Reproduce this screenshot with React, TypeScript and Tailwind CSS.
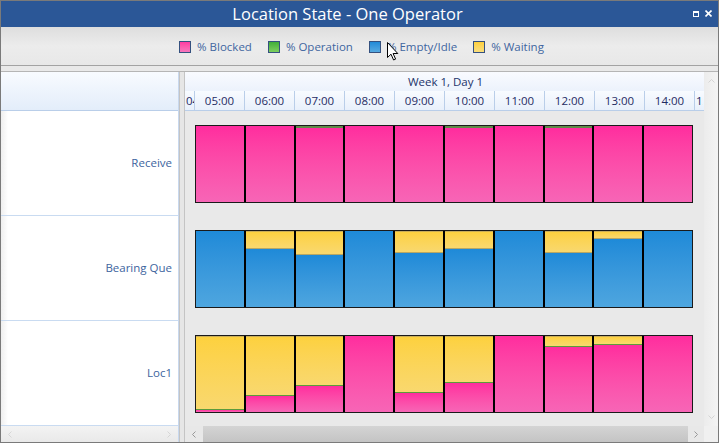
import React from 'react';

// Location state chart: one column per hour, stacked segments as percent of bar height
type Col = { waiting: number; blocked: number; idle: number; op?: boolean };

const hours = ['05:00', '06:00', '07:00', '08:00', '09:00', '10:00', '11:00', '12:00', '13:00', '14:00'];

const rows: { name: string; cols: Col[] }[] = [
  {
    name: 'Receive',
    cols: [
      { waiting: 0, blocked: 100, idle: 0 },
      { waiting: 0, blocked: 100, idle: 0 },
      { waiting: 0, blocked: 100, idle: 0, op: true },
      { waiting: 0, blocked: 100, idle: 0 },
      { waiting: 0, blocked: 100, idle: 0 },
      { waiting: 0, blocked: 100, idle: 0, op: true },
      { waiting: 0, blocked: 100, idle: 0 },
      { waiting: 0, blocked: 100, idle: 0, op: true },
      { waiting: 0, blocked: 100, idle: 0 },
      { waiting: 0, blocked: 100, idle: 0 },
    ],
  },
  {
    name: 'Bearing Que',
    cols: [
      { waiting: 0, blocked: 0, idle: 100 },
      { waiting: 23, blocked: 0, idle: 77 },
      { waiting: 30, blocked: 0, idle: 70 },
      { waiting: 0, blocked: 0, idle: 100 },
      { waiting: 28, blocked: 0, idle: 72 },
      { waiting: 22, blocked: 0, idle: 78 },
      { waiting: 0, blocked: 0, idle: 100 },
      { waiting: 28, blocked: 0, idle: 72 },
      { waiting: 9, blocked: 0, idle: 91 },
      { waiting: 0, blocked: 0, idle: 100 },
    ],
  },
  {
    name: 'Loc1',
    cols: [
      { waiting: 96, blocked: 4, idle: 0 },
      { waiting: 78, blocked: 22, idle: 0 },
      { waiting: 64, blocked: 36, idle: 0 },
      { waiting: 0, blocked: 100, idle: 0 },
      { waiting: 74, blocked: 26, idle: 0 },
      { waiting: 60, blocked: 40, idle: 0 },
      { waiting: 0, blocked: 100, idle: 0 },
      { waiting: 13, blocked: 87, idle: 0 },
      { waiting: 10, blocked: 90, idle: 0 },
      { waiting: 0, blocked: 100, idle: 0 },
    ],
  },
];

const legend = [
  { label: '% Blocked', fill: 'bg-gradient-to-b from-[#ff3aa2] to-[#f776bc]' },
  { label: '% Operation', fill: 'bg-gradient-to-b from-[#3fae3a] to-[#7ccf5e]' },
  { label: '% Empty/Idle', fill: 'bg-gradient-to-b from-[#1f8ad8] to-[#54a9e0]' },
  { label: '% Waiting', fill: 'bg-gradient-to-b from-[#fdd03c] to-[#f9de7c]' },
];

const BAR_H = 76;

const Bar: React.FC<{ col: Col }> = ({ col }) => {
  const w = Math.round((col.waiting / 100) * BAR_H);
  const rest = BAR_H - w;
  const restPink = col.blocked > 0;
  return (
    <div className="flex-1 flex flex-col h-full">
      {w > 0 && (
        <div
          className="bg-gradient-to-b from-[#fdd13e] to-[#f9d86e] border-t border-[#c9ad58]"
          style={{ height: w }}
        />
      )}
      {rest > 0 && (
        <div
          className={`flex-1 ${restPink ? 'bg-gradient-to-b from-[#ff2c9e] to-[#f765b6]' : 'bg-gradient-to-b from-[#1e8ad8] to-[#4ea6df]'} ${
            col.op ? 'border-t-2 border-[#5f8a48]' : w > 0 ? (restPink ? 'border-t border-[#5d9a3c]' : 'border-t border-[#b7a764]') : ''
          }`}
        />
      )}
    </div>
  );
};

const Chevron: React.FC<{ dir: 'l' | 'r' | 'u' | 'd'; className?: string }> = ({ dir, className }) => {
  const d = {
    l: 'M6 1 L2 5 L6 9',
    r: 'M2 1 L6 5 L2 9',
    u: 'M1 6 L5 2 L9 6',
    d: 'M1 2 L5 6 L9 2',
  }[dir];
  const vb = dir === 'l' || dir === 'r' ? '0 0 8 10' : '0 0 10 8';
  return (
    <svg viewBox={vb} className={className} fill="none" stroke="currentColor" strokeWidth="1.2">
      <path d={d} />
    </svg>
  );
};

export default function App() {
  return (
    <div
      className="relative w-[719px] h-[443px] border border-[#7a7a7a] bg-[#e9e9e9] flex flex-col overflow-hidden"
      style={{ fontFamily: '"Open Sans", "Noto Sans", sans-serif' }}
    >
      {/* Title bar */}
      <div className="relative h-[26px] shrink-0 bg-[#2b5797] flex items-center justify-center pr-[24px]">
        <span className="text-white text-[16.5px] leading-none">Location State - One Operator</span>
        <div className="absolute right-[6px] top-[9px] flex items-center gap-[6px]">
          <div className="w-[6px] h-[6px] border border-white border-t-2" />
          <svg viewBox="0 0 7 7" className="w-[7px] h-[7px]" stroke="white" strokeWidth="1.6">
            <path d="M0.5 0.5 L6.5 6.5 M6.5 0.5 L0.5 6.5" />
          </svg>
        </div>
      </div>

      {/* Legend */}
      <div className="h-[39px] shrink-0 bg-gradient-to-b from-[#dedede] via-[#ececec] to-[#e8e8e8] border-b border-[#a3a3a3] flex items-center justify-center pl-[4px] pt-[2px] gap-[16px]">
        {legend.map(l => (
          <div key={l.label} className="flex items-center gap-[6px]">
            <div className={`w-[12px] h-[12px] border border-[#35517f] ${l.fill}`} />
            <span className="text-[11.5px] text-[#3f66a0]">{l.label}</span>
          </div>
        ))}
      </div>
      <div className="h-[6px] shrink-0 border-b border-[#b5b5b5]" />

      {/* Body */}
      <div className="flex-1 flex min-h-0">
        {/* Left names panel */}
        <div className="w-[178px] shrink-0 flex flex-col border-r border-[#c8d8ee] bg-gradient-to-r from-[#efefef] via-white via-[4%] to-white">
          <div className="h-[39px] shrink-0 bg-gradient-to-b from-[#f8fbff] to-[#e3edfa] border-b border-[#b9cee9]" />
          {rows.map(r => (
            <div key={r.name} className="h-[105px] shrink-0 border-b border-[#c9dbf1] flex items-center justify-end pr-[6px]">
              <span className="text-[11.5px] text-[#3d649e]">{r.name}</span>
            </div>
          ))}
          <div className="flex-1 flex items-center justify-between px-[6px] text-[#d2d2d2] bg-gradient-to-b from-[#f3f3f3] to-[#e9e9e9]">
            <Chevron dir="l" className="w-[6px] h-[9px]" />
            <Chevron dir="r" className="w-[6px] h-[9px]" />
          </div>
        </div>

        {/* Splitter */}
        <div className="w-[6px] shrink-0 bg-[#e6e6e6] border-l border-[#bdbdbd] border-r border-[#c4c4c4]" />

        {/* Right chart panel */}
        <div className="flex-1 flex min-w-0">
          <div className="flex-1 flex flex-col min-w-0">
            <div className="h-[19px] shrink-0 bg-gradient-to-b from-[#f9fbff] to-[#ecf2fc] flex items-center justify-center">
              <span className="text-[11.5px] text-[#22336a] pl-[2px]">Week 1, Day 1</span>
            </div>
            <div className="h-[20px] shrink-0 flex overflow-hidden bg-gradient-to-b from-[#f8fbff] to-[#e8f0fb] border-b border-[#b9cee9] text-[11.5px] text-[#1f2b63]">
              <div className="w-[10px] shrink-0 overflow-hidden border-r border-[#b9cee9] pl-[1px] leading-[19px] whitespace-nowrap">04</div>
              {hours.map(h => (
                <div key={h} className="w-[50px] shrink-0 border-r border-[#b9cee9] text-center leading-[19px]">
                  {h}
                </div>
              ))}
              <div className="w-[8px] shrink-0 overflow-hidden pl-[1px] leading-[19px] whitespace-nowrap">15</div>
            </div>
            <div className="flex-1 flex flex-col pl-[10px] bg-[#e9e9e9]">
              {rows.map(r => (
                <div key={r.name} className="h-[105px] shrink-0 pt-[14px]">
                  <div className="w-[498px] h-[78px] flex gap-[2px] bg-black border border-[#1a1a1a]">
                    {r.cols.map((c, i) => (
                      <Bar key={i} col={c} />
                    ))}
                  </div>
                </div>
              ))}
            </div>
            <div className="h-[16px] shrink-0 flex items-center bg-[#e8e8e8]">
              <div className="w-[18px] flex justify-center text-[#8e8e8e]">
                <Chevron dir="l" className="w-[6px] h-[9px]" />
              </div>
              <div className="flex-1 h-full bg-gradient-to-b from-[#d4d4d4] to-[#c4c4c4]" />
              <div className="w-[16px] flex justify-center text-[#8e8e8e]">
                <Chevron dir="r" className="w-[6px] h-[9px]" />
              </div>
            </div>
          </div>
          {/* Vertical scrollbar */}
          <div className="w-[14px] shrink-0 flex flex-col">
            <div className="flex-1 bg-gradient-to-r from-[#ececec] to-[#f4f4f4] flex flex-col items-center justify-between py-[6px] text-[#d0d0d0]">
              <Chevron dir="u" className="w-[9px] h-[6px]" />
              <Chevron dir="d" className="w-[9px] h-[6px]" />
            </div>
            <div className="h-[16px] shrink-0 bg-[#f0f0f0]" />
          </div>
        </div>
      </div>

      {/* Mouse cursor */}
      <svg viewBox="0 0 12 19" className="absolute left-[386px] top-[41px] w-[12px] h-[19px]">
        <path d="M0.5 0.5 L0.5 15.5 L4 12.2 L6.6 18 L8.6 17.1 L6.1 11.5 L10.8 11.5 Z" fill="white" stroke="black" strokeWidth="1" />
      </svg>
    </div>
  );
}
